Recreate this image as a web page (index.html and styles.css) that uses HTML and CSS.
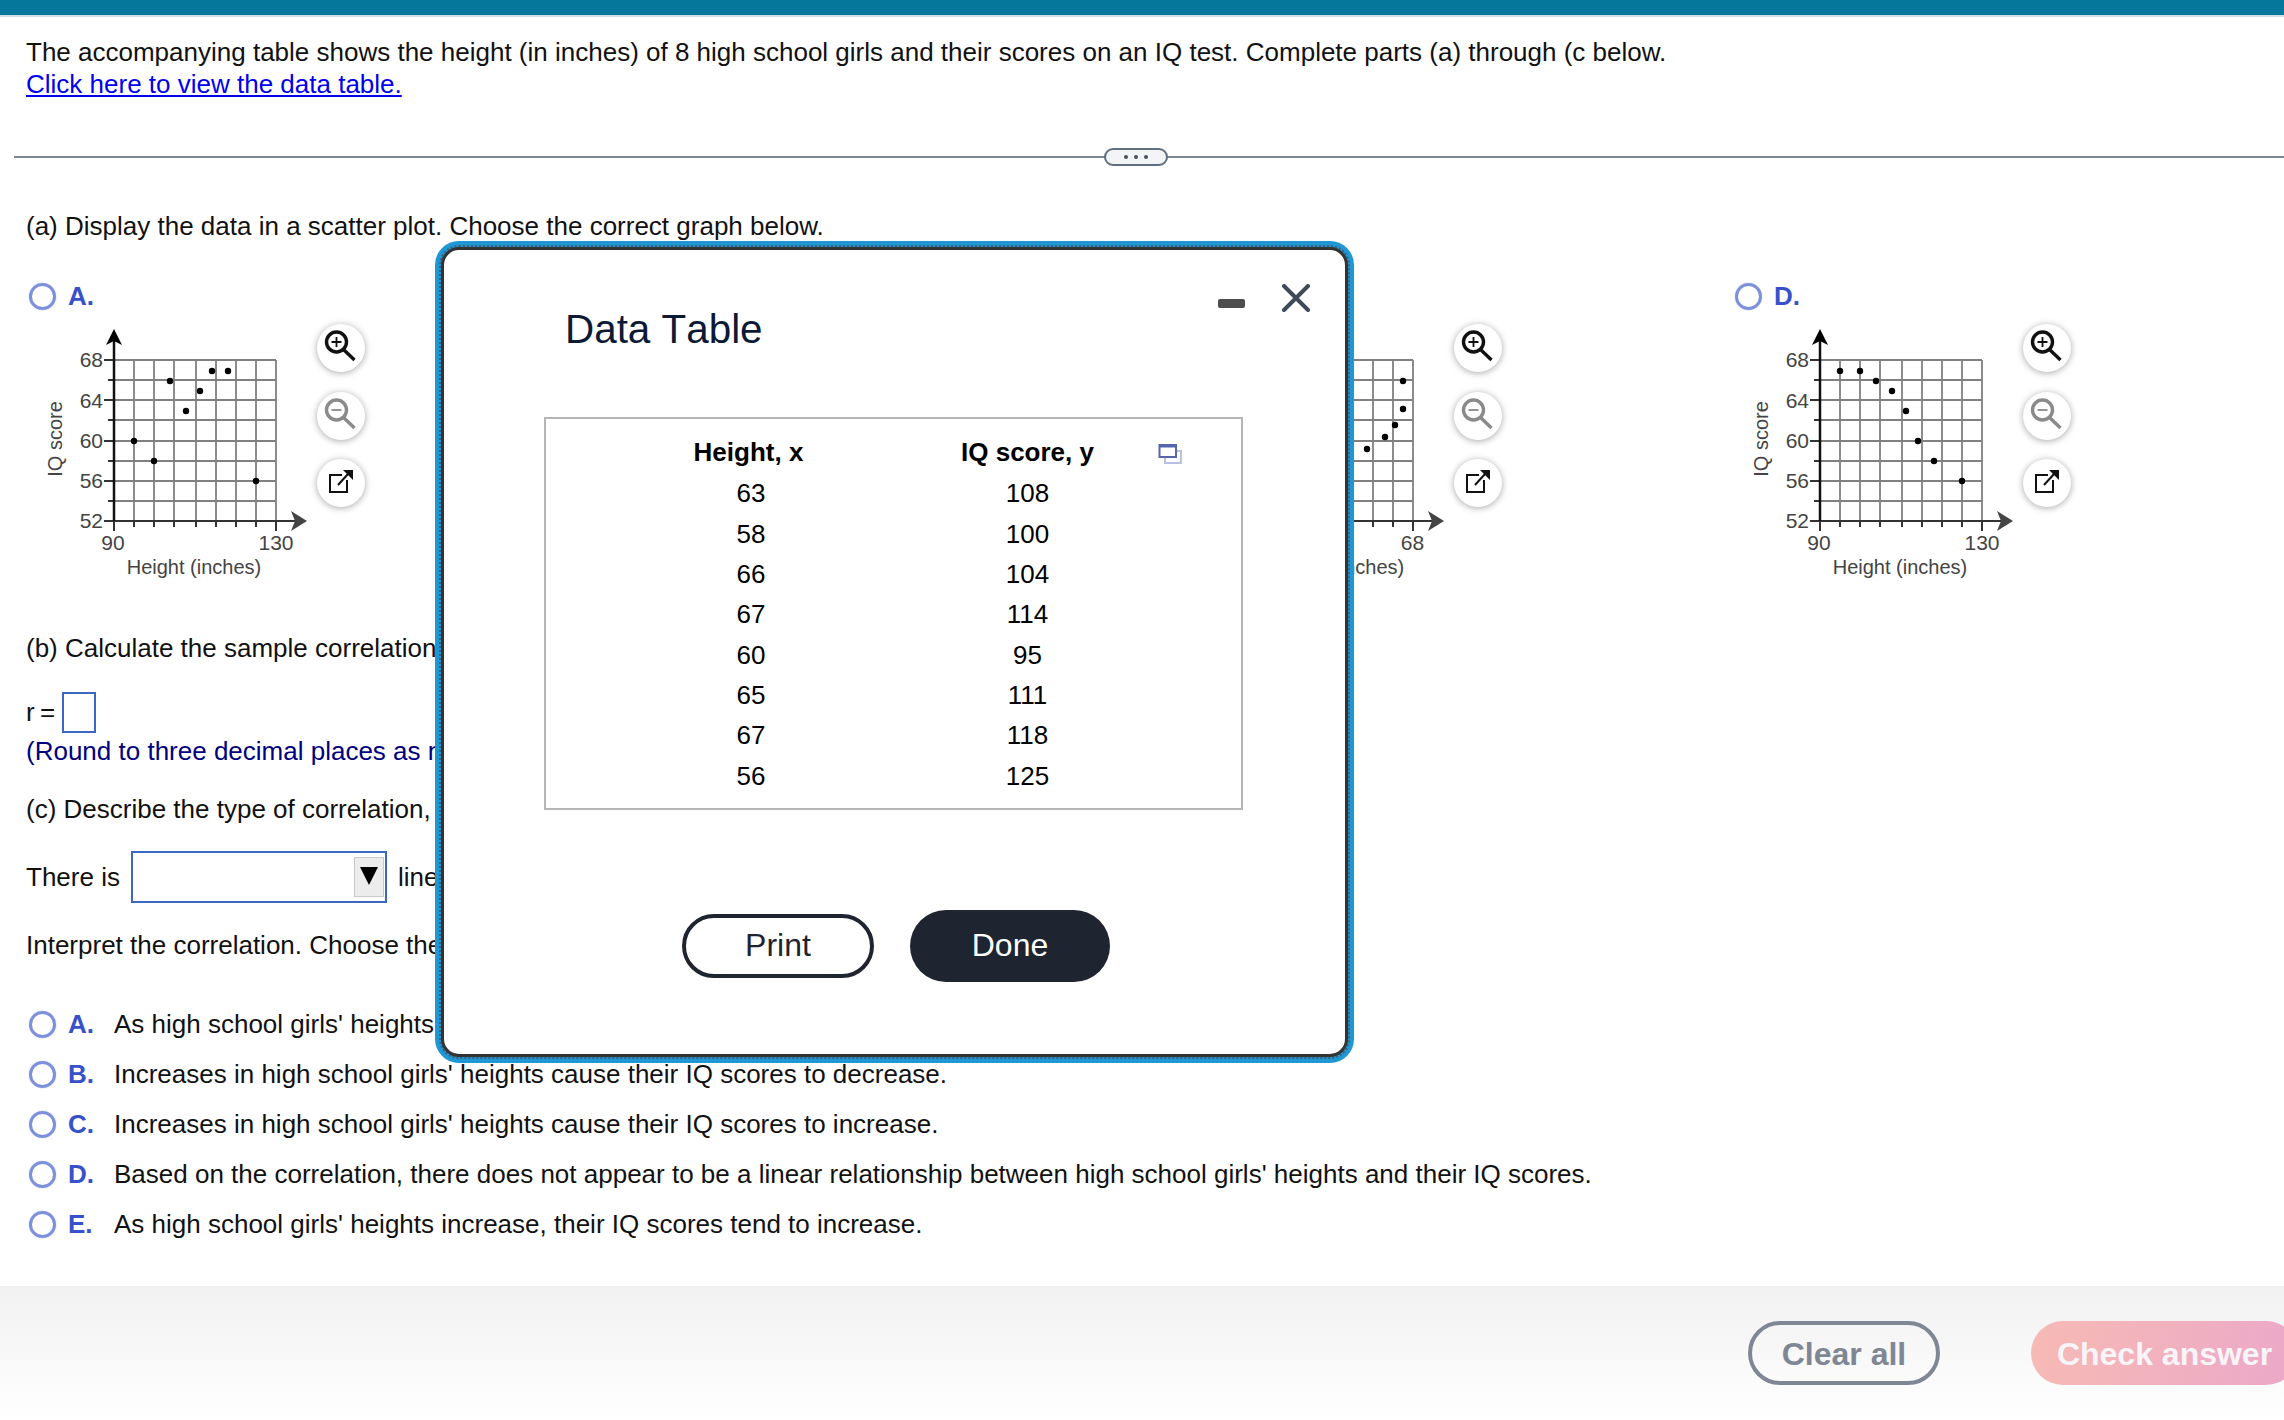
FILE: index.html
```html
<!DOCTYPE html>
<html lang="en">
<head>
    <meta charset="UTF-8">
    <title>Data Table</title>
    <link rel="stylesheet" href="styles.css">
</head>
<body>
    <svg class="defs" width="0" height="0">
        <defs>
            <g id="plot-frame">
                <path class="grid" d="M134 360V521M154 360V521M174 360V521M196 360V521M216 360V521M236 360V521M256 360V521M276 360V521M114 360H276M114 380H276M114 400H276M114 420H276M114 441H276M114 461H276M114 481H276M114 501H276"/>
                <path class="axis" d="M104 360H114M108 380H114M104 400H114M108 420H114M104 441H114M108 461H114M104 481H114M108 501H114M104 521H114M134 521V527M154 521V527M174 521V527M196 521V527M216 521V527M236 521V527M256 521V527M114 521V531M276 521V531"/>
                <path class="axis-x" d="M114 521H300"/>
                <path class="arrow-x" d="M291 511L307 521L291 531L295 521Z"/>
                <path class="axis-y" d="M114 521V340"/>
                <path class="arrow-y" d="M114 329L122 345L114 341L106 345Z"/>
                <text class="tick end" x="103" y="367">68</text>
                <text class="tick end" x="103" y="408">64</text>
                <text class="tick end" x="103" y="448">60</text>
                <text class="tick end" x="103" y="488">56</text>
                <text class="tick end" x="103" y="528">52</text>
                <text class="tick mid axis-name" transform="translate(62 439) rotate(-90)">IQ score</text>
            </g>
            <g id="zoom-lens">
                <circle cx="19.5" cy="18" r="10"/>
                <path d="M27 26L37.5 36"/>
            </g>
        </defs>
    </svg>

    <div class="page">
        <div class="top-bar"></div>

        <div class="content intro">
            <p>The accompanying table shows the height (in inches) of 8 high school girls and their scores on an IQ test. Complete parts (a) through (c below.</p>
            <p><a href="#">Click here to view the data table.</a></p>
        </div>

        <div class="divider"><span class="more"><i></i><i></i><i></i></span></div>

        <div class="content">
            <p class="part-a">(a) Display the data in a scatter plot. Choose the correct graph below.</p>

            <div class="graphs">
                <div class="graph">
                    <div class="choice"><span class="radio"></span><b>A.</b></div>
                    <div class="graph-body">
                        <svg class="plot" viewBox="40 320 277 270" width="277" height="270">
                            <use href="#plot-frame"/>
                            <g class="points">
                                <circle cx="134" cy="441" r="3.2"/><circle cx="154" cy="461" r="3.2"/>
                                <circle cx="170" cy="381" r="3.2"/><circle cx="186" cy="411" r="3.2"/>
                                <circle cx="200" cy="391" r="3.2"/><circle cx="212" cy="371" r="3.2"/>
                                <circle cx="228" cy="371" r="3.2"/><circle cx="256" cy="481" r="3.2"/>
                            </g>
                            <text class="tick mid" x="113" y="550">90</text>
                            <text class="tick mid" x="276" y="550">130</text>
                            <text class="tick mid axis-name" x="194" y="574">Height (inches)</text>
                        </svg>
                        <div class="tools">
                            <span class="tool"><svg viewBox="0 0 48 48"><use href="#zoom-lens"/><path class="thin" d="M14.5 18H24.5M19.5 13V23"/></svg></span>
                            <span class="tool off"><svg viewBox="0 0 48 48"><use href="#zoom-lens"/><path class="thin" d="M14.5 18H24.5"/></svg></span>
                            <span class="tool"><svg viewBox="0 0 48 48"><path class="thin-2" d="M30 21V33H13V16H25"/><path class="thin-2" d="M21 26L31 15"/><path class="head" d="M26 11H36V21Z"/></svg></span>
                        </div>
                    </div>
                </div>

                <div class="graph">
                    <div class="graph-body graph-hidden">
                        <svg class="plot" viewBox="40 320 277 270" width="277" height="270">
                            <use href="#plot-frame"/>
                        </svg>
                    </div>
                </div>

                <div class="graph">
                    <div class="graph-body graph-hidden">
                        <svg class="plot" viewBox="40 320 277 270" width="277" height="270">
                            <use href="#plot-frame"/>
                            <g class="points">
                                <circle cx="266" cy="381" r="3.2"/><circle cx="266" cy="409" r="3.2"/>
                                <circle cx="258" cy="425" r="3.2"/><circle cx="248" cy="437" r="3.2"/>
                                <circle cx="230" cy="449" r="3.2"/>
                            </g>
                            <text class="tick mid" x="275.5" y="550">68</text>
                            <text class="tick mid axis-name" x="200" y="574">Height (inches)</text>
                        </svg>
                        <div class="tools">
                            <span class="tool"><svg viewBox="0 0 48 48"><use href="#zoom-lens"/><path class="thin" d="M14.5 18H24.5M19.5 13V23"/></svg></span>
                            <span class="tool off"><svg viewBox="0 0 48 48"><use href="#zoom-lens"/><path class="thin" d="M14.5 18H24.5"/></svg></span>
                            <span class="tool"><svg viewBox="0 0 48 48"><path class="thin-2" d="M30 21V33H13V16H25"/><path class="thin-2" d="M21 26L31 15"/><path class="head" d="M26 11H36V21Z"/></svg></span>
                        </div>
                    </div>
                </div>

                <div class="graph">
                    <div class="choice"><span class="radio"></span><b>D.</b></div>
                    <div class="graph-body">
                        <svg class="plot" viewBox="40 320 277 270" width="277" height="270">
                            <use href="#plot-frame"/>
                            <g class="points">
                                <circle cx="134" cy="371" r="3.2"/><circle cx="154" cy="371" r="3.2"/>
                                <circle cx="170" cy="381" r="3.2"/><circle cx="186" cy="391" r="3.2"/>
                                <circle cx="200" cy="411" r="3.2"/><circle cx="212" cy="441" r="3.2"/>
                                <circle cx="228" cy="461" r="3.2"/><circle cx="256" cy="481" r="3.2"/>
                            </g>
                            <text class="tick mid" x="113" y="550">90</text>
                            <text class="tick mid" x="276" y="550">130</text>
                            <text class="tick mid axis-name" x="194" y="574">Height (inches)</text>
                        </svg>
                        <div class="tools">
                            <span class="tool"><svg viewBox="0 0 48 48"><use href="#zoom-lens"/><path class="thin" d="M14.5 18H24.5M19.5 13V23"/></svg></span>
                            <span class="tool off"><svg viewBox="0 0 48 48"><use href="#zoom-lens"/><path class="thin" d="M14.5 18H24.5"/></svg></span>
                            <span class="tool"><svg viewBox="0 0 48 48"><path class="thin-2" d="M30 21V33H13V16H25"/><path class="thin-2" d="M21 26L31 15"/><path class="head" d="M26 11H36V21Z"/></svg></span>
                        </div>
                    </div>
                </div>
            </div>

            <p class="part-b">(b) Calculate the sample correlation coefficient r.</p>
            <div class="answer-row"><span class="r-label">r =</span><span class="answer-box"></span></div>
            <p class="hint">(Round to three decimal places as needed.)</p>

            <p class="part-c">(c) Describe the type of correlation, if any, and interpret the correlation in the context of the data.</p>
            <div class="select-row">
                <span>There is</span>
                <span class="select"><span class="select-btn"><i></i></span></span>
                <span>linear correlation.</span>
            </div>
            <p class="interpret">Interpret the correlation. Choose the correct answer below.</p>

            <ul class="options">
                <li><span class="radio"></span><b>A.</b><span>As high school girls' heights increase, their IQ scores tend to decrease.</span></li>
                <li><span class="radio"></span><b>B.</b><span>Increases in high school girls' heights cause their IQ scores to decrease.</span></li>
                <li><span class="radio"></span><b>C.</b><span>Increases in high school girls' heights cause their IQ scores to increase.</span></li>
                <li><span class="radio"></span><b>D.</b><span>Based on the correlation, there does not appear to be a linear relationship between high school girls' heights and their IQ scores.</span></li>
                <li><span class="radio"></span><b>E.</b><span>As high school girls' heights increase, their IQ scores tend to increase.</span></li>
            </ul>
        </div>

        <div class="footer">
            <button class="clear-btn">Clear all</button>
            <button class="check-btn">Check answer</button>
        </div>
    </div>

    <!-- popup window over the question -->
    <div class="modal">
        <div class="modal-seam">
            <div class="modal-body">
                <div class="modal-head">
                    <h2>Data Table</h2>
                    <div class="modal-controls">
                        <span class="minimize"></span>
                        <svg class="close" viewBox="0 0 28 28" width="28" height="28"><path d="M2 2L26 26M26 2L2 26"/></svg>
                    </div>
                </div>

                <div class="table-box">
                    <table>
                        <thead>
                            <tr><th>Height, x</th><th>IQ score, y</th></tr>
                        </thead>
                        <tbody>
                            <tr><td>63</td><td>108</td></tr>
                            <tr><td>58</td><td>100</td></tr>
                            <tr><td>66</td><td>104</td></tr>
                            <tr><td>67</td><td>114</td></tr>
                            <tr><td>60</td><td>95</td></tr>
                            <tr><td>65</td><td>111</td></tr>
                            <tr><td>67</td><td>118</td></tr>
                            <tr><td>56</td><td>125</td></tr>
                        </tbody>
                    </table>
                    <svg class="copy" viewBox="0 0 24 21" width="24" height="21">
                        <path class="copy-back" d="M7 8H23V20H7Z"/>
                        <path class="copy-front" d="M1.5 2H18V14H1.5Z"/>
                        <path class="copy-bar" d="M1 1H18.5V4.5H1Z"/>
                    </svg>
                </div>

                <div class="modal-buttons">
                    <button class="print-btn">Print</button>
                    <button class="done-btn">Done</button>
                </div>
            </div>
        </div>
    </div>
</body>
</html>
```

FILE: styles.css
```css
* {
    box-sizing: border-box;
}
html, body {
    margin: 0;
    height: 1420px;
    overflow: hidden;
}
body {
    font-family: "Liberation Sans", Arial, sans-serif;
    font-size: 26px;
    line-height: 32px;
    color: #111;
    background: #fff;
}
p {
    margin: 0;
}
.defs {
    position: absolute;
}
.page {
    display: flex;
    flex-direction: column;
    height: 1420px;
}
.top-bar {
    height: 17px;
    background: #04779b;
    border-bottom: 2px solid #d5dde2;
    flex-shrink: 0;
}
.content {
    padding: 0 0 0 26px;
}
.intro {
    padding-top: 19px;
}
a {
    color: #0000ee;
}

/* divider with the three dots */
.divider {
    display: flex;
    align-items: center;
    justify-content: center;
    height: 18px;
    margin: 48px 0 0 14px;
    padding-right: 26px;
    background: linear-gradient(#7a8896, #7a8896) center / 100% 2px no-repeat;
}
.more {
    display: flex;
    align-items: center;
    justify-content: center;
    gap: 6px;
    width: 64px;
    height: 18px;
    background: #f3f4f6;
    border: 2px solid #5f6f80;
    border-radius: 9px;
}
.more i {
    width: 4px;
    height: 4px;
    border-radius: 50%;
    background: #47505c;
}

.part-a {
    margin-top: 44px;
}
.graphs {
    display: grid;
    grid-template-columns: repeat(4, 568.67px);
    margin-top: 38px;
}
.choice {
    display: flex;
    align-items: center;
    height: 32px;
}
.radio {
    display: block;
    width: 27px;
    height: 27px;
    margin-left: 3px;
    border: 3px solid #7d90dc;
    border-radius: 50%;
    box-shadow: 0 0 1px #7d90dc;
    flex-shrink: 0;
}
.choice b, .options b {
    color: #3651c9;
    margin-left: 12px;
}
.graph-body {
    display: flex;
    margin: 8px 0 0 14px;
}
.graph-hidden {
    margin-top: 40px;
}
.plot {
    display: block;
    flex-shrink: 0;
}
.grid {
    fill: none;
    stroke: #808080;
    stroke-width: 1.8;
}
.axis, .axis-x {
    fill: none;
    stroke: #333;
    stroke-width: 2;
}
.axis-y {
    fill: none;
    stroke: #111;
    stroke-width: 2.5;
}
.arrow-x {
    fill: #444;
}
.arrow-y {
    fill: #000;
}
.points circle {
    fill: #000;
}
.tick {
    font-size: 21px;
    fill: #444;
}
.axis-name {
    font-size: 20px;
}
.end {
    text-anchor: end;
}
.mid {
    text-anchor: middle;
}

.tools {
    display: flex;
    flex-direction: column;
    gap: 19.5px;
    margin-top: 4px;
}
.tool {
    display: block;
    width: 48px;
    height: 48px;
    background: #fff;
    border-radius: 50%;
    box-shadow: 0 1px 7px rgba(0, 0, 0, 0.35);
}
.tool svg {
    display: block;
    width: 48px;
    height: 48px;
    fill: none;
    stroke: #111;
    stroke-width: 3.4;
}
.tool .thin {
    stroke-width: 1.8;
}
.tool .thin-2 {
    stroke-width: 2;
}
.tool .head {
    fill: #111;
    stroke: none;
}
.tool.off svg {
    stroke: #8a8a8a;
}

.part-b {
    margin-top: 42px;
}
.answer-row {
    display: flex;
    align-items: center;
    gap: 5px;
    height: 41px;
    margin-top: 28px;
}
.r-label {
    word-spacing: -2px;
    margin-top: -2px;
}
.answer-box {
    width: 34px;
    height: 41px;
    border: 2px solid #3a67c4;
    margin-left: 2px;
}
.hint {
    margin-top: 2px;
    color: #000080;
}
.part-c {
    margin-top: 26px;
}
.select-row {
    display: flex;
    align-items: center;
    gap: 11px;
    margin-top: 26px;
    height: 52px;
    white-space: nowrap;
}
.select {
    display: flex;
    justify-content: flex-end;
    align-items: center;
    width: 256px;
    height: 52px;
    padding-right: 1px;
    border: 2px solid #3a67c4;
}
.select-btn {
    display: flex;
    justify-content: center;
    padding-top: 9px;
    width: 30px;
    height: 40px;
    background: #ececec;
    border: 1px solid #c9c9c9;
}
.select-btn i {
    width: 0;
    height: 0;
    border-left: 9px solid transparent;
    border-right: 9px solid transparent;
    border-top: 18px solid #000;
}
.interpret {
    margin-top: 26px;
}
.options {
    list-style: none;
    margin: 38px 0 0;
    padding: 0;
}
.options li {
    display: flex;
    align-items: center;
    height: 50px;
}
.options b {
    width: 46px;
    flex-shrink: 0;
}

.footer {
    display: flex;
    justify-content: flex-end;
    align-items: center;
    gap: 91px;
    height: 134px;
    margin-top: auto;
    margin-right: -14px;
    background: linear-gradient(#f1f1f1, #fff);
    flex-shrink: 0;
}
button {
    font-family: inherit;
    font-size: 32px;
    border-radius: 32px;
    padding: 0;
}
.clear-btn {
    width: 192px;
    height: 64px;
    padding-top: 2px;
    font-weight: bold;
    color: #7f8694;
    background: transparent;
    border: 4px solid #7f8694;
}
.check-btn {
    width: 267px;
    height: 64px;
    padding-top: 2px;
    font-weight: bold;
    color: #f8f5f8;
    background: linear-gradient(100deg, #f7bab4, #eba8c9);
    border: none;
}

/* Data Table popup */
.modal {
    position: absolute;
    left: 435px;
    top: 241px;
    width: 919px;
    height: 822px;
    background: #1f97d4;
    border: 4px solid #1f97d4;
    border-radius: 24px;
}
.modal-seam {
    height: 100%;
    border: 2px dotted #3d6178;
    border-radius: 20px;
}
.modal-body {
    height: 100%;
    background: #fff;
    border: 3px solid #333;
    border-radius: 18px;
}
.modal-head {
    display: flex;
    justify-content: space-between;
    align-items: flex-start;
    padding: 0 35px 0 121px;
}
.modal-head h2 {
    margin: 55px 0 0;
    font-size: 40.4px;
    line-height: 48px;
    font-weight: normal;
    font-kerning: none;
    color: #0c1a35;
}
.modal-controls {
    display: flex;
    align-items: center;
    gap: 37px;
    margin-top: 34px;
}
.minimize {
    width: 27px;
    height: 9px;
    margin-top: 10px;
    background: #4d4d4d;
    border-radius: 2px;
}
.close {
    display: block;
    fill: none;
    stroke: #3d4a5a;
    stroke-width: 4;
    stroke-linecap: round;
}
.table-box {
    position: relative;
    width: 699px;
    height: 393px;
    margin: 64px 0 0 100px;
    padding: 13px 0 0 64px;
    border: 2px solid #b5b5b5;
}
table {
    width: 558px;
    border-collapse: collapse;
    color: #000;
}
th, td {
    height: 40.3px;
    padding: 0;
    text-align: center;
}
td {
    padding-top: 2px;
}
th:first-child {
    width: 277px;
}
td:first-child {
    padding-left: 5px;
}
.copy {
    position: absolute;
    left: 612px;
    top: 24px;
    fill: none;
}
.copy-back {
    stroke: #b9c0e2;
    stroke-width: 2;
}
.copy-front {
    stroke: #5566ae;
    stroke-width: 2;
    fill: #fff;
}
.copy-bar {
    fill: #5566ae;
}
.modal-buttons {
    display: flex;
    align-items: center;
    gap: 36px;
    margin-top: 100px;
    padding-left: 238px;
}
.print-btn {
    width: 192px;
    height: 64px;
    padding-bottom: 2px;
    color: #1e2430;
    background: #fff;
    border: 4px solid #1e2430;
}
.done-btn {
    width: 200px;
    height: 72px;
    padding-bottom: 2px;
    border-radius: 36px;
    color: #fff;
    background: #1e2430;
    border: none;
}
```
